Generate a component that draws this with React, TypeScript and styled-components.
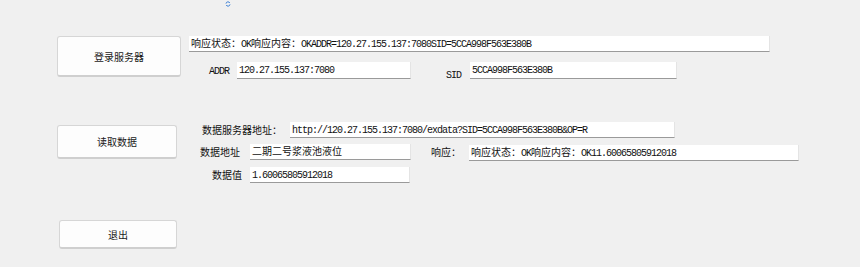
import React from "react";
import styled, { createGlobalStyle } from "styled-components";

const GlobalStyle = createGlobalStyle`
  html, body {
    margin: 0;
    padding: 0;
    background: #f0f0f0;
  }
  body {
    font-family: "Noto Sans CJK SC", "Liberation Sans", sans-serif;
    font-size: 10px;
    color: #000;
  }
`;

// ============== STYLED COMPONENTS ==============

const Page = styled.div`
  width: 860px;
  height: 267px;
  background: #f0f0f0;
  overflow: hidden;
`;

const IconBar = styled.div`
  height: 10px;
  padding-left: 225px;
  display: flex;
  align-items: flex-start;
  padding-top: 1px;
  box-sizing: border-box;
`;

const Section = styled.div<{ $top: number }>`
  display: flex;
  align-items: flex-start;
  margin-top: ${(p) => p.$top}px;
`;

const ActionButton = styled.button<{
  $left: number;
  $width: number;
  $height: number;
  $offset?: number;
}>`
  margin-left: ${(p) => p.$left}px;
  margin-top: ${(p) => p.$offset ?? 0}px;
  width: ${(p) => p.$width}px;
  height: ${(p) => p.$height}px;
  flex: none;
  background: #fdfdfd;
  border: 1px solid #d6d6d6;
  border-bottom: 2px solid #cfcfcf;
  border-radius: 3px;
  font-family: "Noto Sans CJK SC", sans-serif;
  font-size: 10px;
  color: #1a1a1a;
  padding: 0;
  cursor: pointer;
`;

const Column = styled.div<{ $left: number }>`
  display: flex;
  flex-direction: column;
  margin-left: ${(p) => p.$left}px;
`;

const Row = styled.div<{ $gap?: number }>`
  display: flex;
  align-items: flex-start;
  margin-top: ${(p) => p.$gap ?? 0}px;
`;

const Label = styled.div<{ $width: number; $pad?: number; $drop?: number; $right?: boolean }>`
  width: ${(p) => p.$width}px;
  height: 16px;
  flex: none;
  box-sizing: border-box;
  padding-left: ${(p) => (p.$right ? 0 : p.$pad ?? 0)}px;
  padding-right: ${(p) => (p.$right ? p.$pad ?? 0 : 0)}px;
  padding-top: ${(p) => p.$drop ?? 0}px;
  text-align: ${(p) => (p.$right ? "right" : "left")};
  font-family: "Noto Sans CJK SC", sans-serif;
  font-size: 10px;
  line-height: 16px;
  color: #111;
  white-space: nowrap;
`;

const Field = styled.div<{ $width: number; $height?: number; $drop?: number }>`
  width: ${(p) => p.$width}px;
  height: ${(p) => p.$height ?? 16}px;
  margin-top: ${(p) => p.$drop ?? 0}px;
  flex: none;
  box-sizing: border-box;
  background: #fff;
  border-bottom: 1px solid #9a9a9a;
  border-right: 1px solid #e4e4e4;
  padding-left: 2px;
  font-family: "Noto Sans CJK SC", sans-serif;
  font-size: 10px;
  line-height: 14px;
  color: #111;
  white-space: nowrap;
  overflow: hidden;
`;

const Latin = styled.span`
  font-family: "Liberation Mono", "DejaVu Sans Mono", monospace;
  font-size: 10px;
  letter-spacing: -1px;
`;

// ============== HELPERS ==============

const Mixed: React.FC<{ text: string }> = ({ text }) => (
  <>
    {text
      .split(/([\x00-\x7F]+)/)
      .filter((s) => s.length > 0)
      .map((s, i) =>
        /^[\x00-\x7F]+$/.test(s) ? <Latin key={i}>{s}</Latin> : <span key={i}>{s}</span>
      )}
  </>
);

const RefreshIcon = () => (
  <svg width="6" height="6" viewBox="0 0 6 6" fill="none">
    <path d="M1 2.6 A2 2 0 0 1 4.8 2" stroke="#3b7fd6" strokeWidth="1" />
    <path d="M5 3.4 A2 2 0 0 1 1.2 4" stroke="#3b7fd6" strokeWidth="1" />
  </svg>
);

// ============== COMPONENTE ==============

export default function App() {
  const sid = "5CCA998F563E380B";
  const addr = "120.27.155.137:7080";
  const valor = "1.60065805912018";

  return (
    <>
      <GlobalStyle />
      <Page>
        <IconBar>
          <RefreshIcon />
        </IconBar>

        <Section $top={26}>
          <ActionButton $left={57} $width={124} $height={41}>
            登录服务器
          </ActionButton>
          <Column $left={8}>
            <Row>
              <Field $width={581}>
                <Mixed text={`响应状态：OK响应内容：OKADDR=${addr}SID=${sid}`} />
              </Field>
            </Row>
            <Row $gap={10}>
              <Label $width={48} $right $pad={8}>
                <Latin>ADDR</Latin>
              </Label>
              <Field $width={174} $height={17}>
                <Mixed text={addr} />
              </Field>
              <Label $width={59} $right $pad={9} $drop={4}>
                <Latin>SID</Latin>
              </Label>
              <Field $width={207} $height={17}>
                <Mixed text={sid} />
              </Field>
            </Row>
          </Column>
        </Section>

        <Section $top={43}>
          <ActionButton $left={57} $width={120} $height={34} $offset={3}>
            读取数据
          </ActionButton>
          <Column $left={23}>
            <Row>
              <Label $width={90} $pad={2}>
                数据服务器地址：
              </Label>
              <Field $width={385}>
                <Mixed text={`http://${addr}/exdata?SID=${sid}&OP=R`} />
              </Field>
            </Row>
            <Row $gap={6}>
              <Label $width={50} $pad={0}>
                数据地址
              </Label>
              <Field $width={161}>二期二号浆液池液位</Field>
              <Label $width={58} $pad={20}>
                响应：
              </Label>
              <Field $width={330} $drop={1}>
                <Mixed text={`响应状态：OK响应内容：OK1${valor}`} />
              </Field>
            </Row>
            <Row $gap={6}>
              <Label $width={50} $pad={12}>
                数据值
              </Label>
              <Field $width={160}>
                <Mixed text={valor} />
              </Field>
            </Row>
          </Column>
        </Section>

        <Section $top={37}>
          <ActionButton $left={59} $width={118} $height={29}>
            退出
          </ActionButton>
        </Section>
      </Page>
    </>
  );
}
